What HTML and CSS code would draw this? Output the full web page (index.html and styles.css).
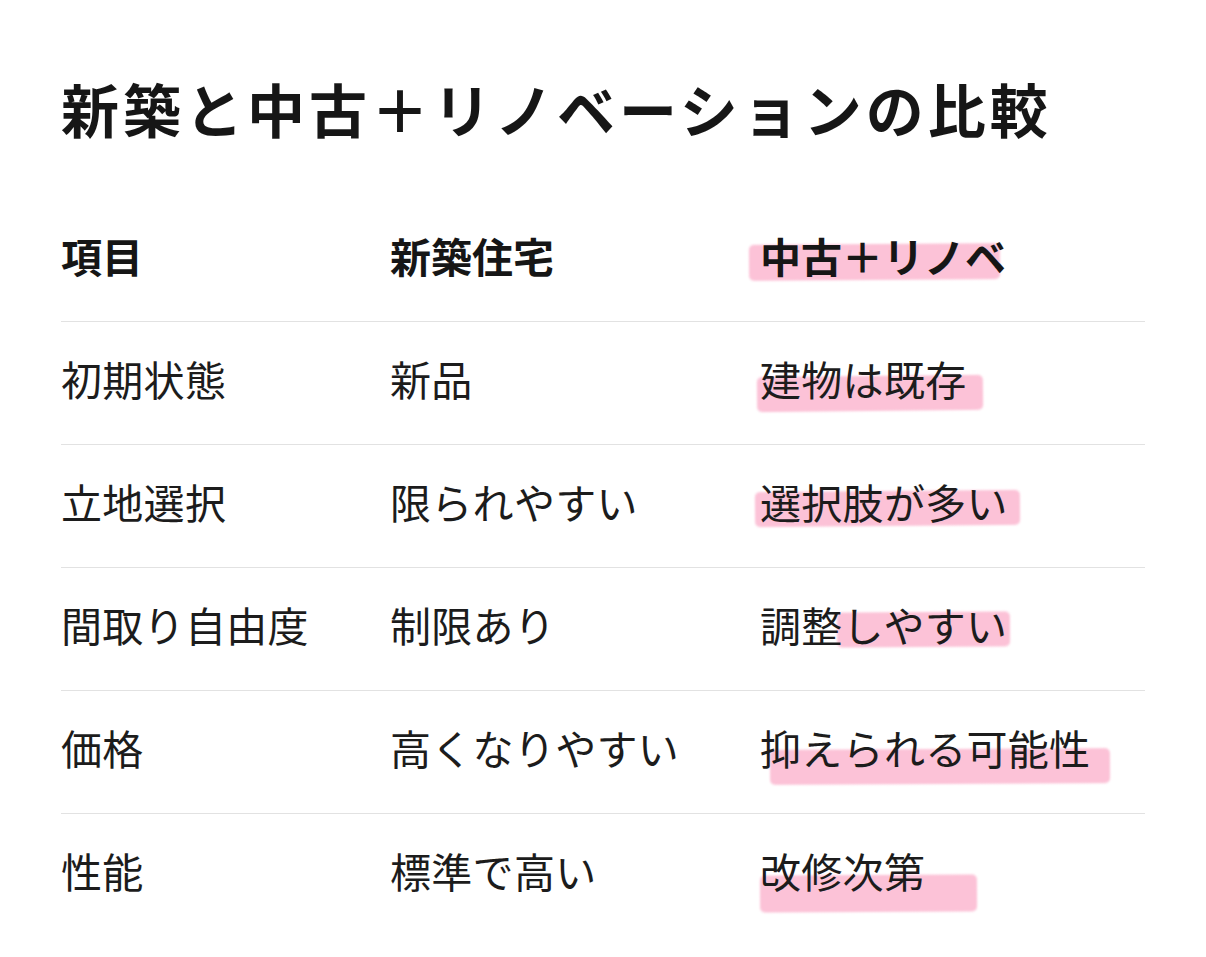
FILE: index.html
```html
<!DOCTYPE html>
<html lang="ja">
<head>
<meta charset="utf-8">
<title>新築と中古＋リノベーションの比較</title>
<link rel="stylesheet" href="styles.css">
</head>
<body>
<main class="page">
  <h1 class="title">新築と中古＋リノベーションの比較</h1>
  <table class="compare">
    <thead>
      <tr>
        <th class="col-item">項目</th>
        <th class="col-new">新築住宅</th>
        <th class="col-reno"><span class="hl hl-h">中古＋リノベ</span></th>
      </tr>
    </thead>
    <tbody>
      <tr>
        <td>初期状態</td>
        <td>新品</td>
        <td><span class="hl hl-1">建物は既存</span></td>
      </tr>
      <tr>
        <td>立地選択</td>
        <td>限られやすい</td>
        <td><span class="hl hl-2">選択肢が多い</span></td>
      </tr>
      <tr>
        <td>間取り自由度</td>
        <td>制限あり</td>
        <td><span class="hl hl-3">調整しやすい</span></td>
      </tr>
      <tr>
        <td>価格</td>
        <td>高くなりやすい</td>
        <td><span class="hl hl-4">抑えられる可能性</span></td>
      </tr>
      <tr>
        <td>性能</td>
        <td>標準で高い</td>
        <td><span class="hl hl-5">改修次第</span></td>
      </tr>
    </tbody>
  </table>
</main>
</body>
</html>
```

FILE: styles.css
```css
html, body {
  margin: 0;
  padding: 0;
  background: #ffffff;
}

body {
  font-family: "Noto Sans CJK JP", "Noto Sans", sans-serif;
  color: #1c1c1c;
}

.page {
  padding: 73px 61px 0 61px;
}

.title {
  margin: 0 0 56px 0;
  font-size: 58px;
  line-height: 70px;
  font-weight: 700;
  color: #161616;
  letter-spacing: 4px;
}

.compare {
  width: 1084px;
  border-collapse: collapse;
  table-layout: fixed;
}

.col-item { width: 329px; }
.col-new { width: 370px; }

.compare th,
.compare td {
  height: 112px;
  padding: 0 0 10px 0;
  text-align: left;
  vertical-align: middle;
  font-size: 41px;
  line-height: 41px;
  white-space: nowrap;
}

.compare th {
  font-weight: 700;
  color: #161616;
}

.compare td {
  font-weight: 400;
  letter-spacing: 0.3px;
}

.compare thead tr,
.compare tbody tr {
  border-bottom: 1px solid #e2e2e2;
}

.compare tbody tr:last-child {
  border-bottom: none;
}

.hl {
  position: relative;
  display: inline-block;
  z-index: 0;
  isolation: isolate;
}

.hl::before {
  content: "";
  position: absolute;
  z-index: -1;
  background: #fcc2d7;
  border-radius: 5px;
  filter: blur(1.3px);
}

.hl-h::before { left: -11px; top: 9px; width: 251px; height: 36px; transform: rotate(-0.4deg); }
.hl-1::before { left: -3px; top: 18px; width: 226px; height: 35px; transform: rotate(-0.6deg); }
.hl-2::before { left: -5px; top: 10px; width: 265px; height: 35px; transform: rotate(-0.5deg); }
.hl-3::before { left: 77px; top: 8px; width: 173px; height: 35px; transform: rotate(-0.4deg); }
.hl-4::before { left: 10px; top: 22px; width: 340px; height: 35px; transform: rotate(-0.3deg); }
.hl-5::before { left: 0; top: 25px; width: 217px; height: 37px; transform: rotate(-0.3deg); }
```
